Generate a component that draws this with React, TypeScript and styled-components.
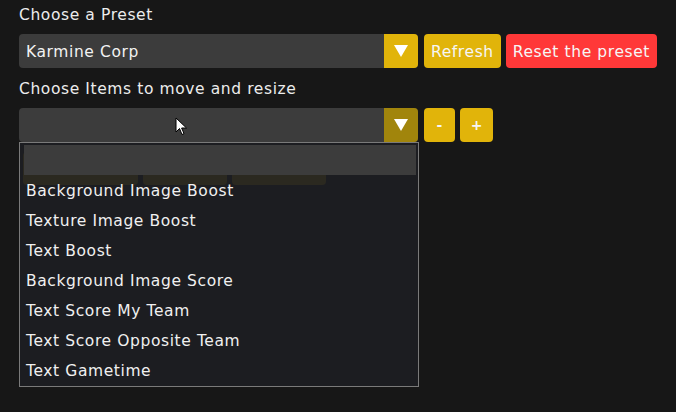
import React from 'react';
import styled, { createGlobalStyle } from 'styled-components';

const GlobalStyle = createGlobalStyle`
  html, body {
    margin: 0;
    padding: 0;
    min-height: 100%;
    background-color: #171717;
  }
  body {
    font-family: 'DejaVu Sans', 'Liberation Sans', sans-serif;
    color: #ececec;
  }
`;

const items = [
  'Background Image Boost',
  'Texture Image Boost',
  'Text Boost',
  'Background Image Score',
  'Text Score My Team',
  'Text Score Opposite Team',
  'Text Gametime',
];

function Arrow() {
  return (
    <svg width="14" height="12" viewBox="0 0 14 12">
      <polygon points="0,0 14,0 7,12" fill="#ffffff" />
    </svg>
  );
}

function Cursor() {
  return (
    <svg width="14" height="20" viewBox="0 0 14 20">
      <path
        d="M1 1 L1 15 L4.5 11.5 L7 17.5 L9 16.6 L6.6 11 L11.5 11 Z"
        fill="#ffffff"
        stroke="#000000"
        strokeWidth="1"
        strokeLinejoin="round"
      />
    </svg>
  );
}

export default function App() {
  return (
    <>
      <GlobalStyle />
      <Page>
        <Label>Choose a Preset</Label>
        <Row>
          <Select>
            <SelectValue>Karmine Corp</SelectValue>
            <ArrowBox>
              <Arrow />
            </ArrowBox>
          </Select>
          <Button>Refresh</Button>
          <Button $danger>Reset the preset</Button>
        </Row>

        <Label>Choose Items to move and resize</Label>
        <Field>
          <Row>
            <Select>
              <SelectValue />
              <ArrowBox $dim>
                <Arrow />
              </ArrowBox>
              <CursorSpot>
                <Cursor />
              </CursorSpot>
            </Select>
            <SmallButton $w={31}>-</SmallButton>
            <SmallButton $w={33}>+</SmallButton>
          </Row>
          <GhostRow>
            <GhostButton $w={115} />
            <GhostButton $w={84} />
            <GhostButton $w={94} />
          </GhostRow>
          <Menu>
            <Search />
            {items.map((item) => (
              <Option key={item}>{item}</Option>
            ))}
          </Menu>
        </Field>
      </Page>
    </>
  );
}

const Page = styled.div`
  box-sizing: border-box;
  min-height: 412px;
  padding: 4px 19px;
  display: flex;
  flex-direction: column;
`;

const Label = styled.div`
  font-size: 15.5px;
  line-height: 20px;
  padding-top: 1px;
  margin: 0 0 9px;
  letter-spacing: 0.6px;
  color: #ececec;
  & + div {
    margin-bottom: 10px;
  }
`;

const Row = styled.div`
  display: flex;
  align-items: center;
  gap: 5px;
`;

const Field = styled.div`
  position: relative;
`;

const Select = styled.div`
  position: relative;
  flex: none;
  width: 399px;
  height: 34px;
  display: flex;
  border-radius: 4px;
  background-color: #3c3c3c;
  margin-right: 1px;
`;

const SelectValue = styled.div`
  flex: 1;
  display: flex;
  align-items: center;
  padding: 1px 0 0 7px;
  font-size: 15.5px;
  letter-spacing: 0.6px;
  color: #f2f2f2;
`;

const ArrowBox = styled.div<{ $dim?: boolean }>`
  width: 34px;
  display: flex;
  align-items: center;
  justify-content: center;
  border-radius: 0 4px 4px 0;
  background-color: ${(p) => (p.$dim ? '#a1850c' : '#e1b40a')};
`;

const CursorSpot = styled.div`
  position: absolute;
  left: 156px;
  top: 9px;
  line-height: 0;
`;

const Button = styled.button<{ $danger?: boolean }>`
  flex: none;
  height: 34px;
  padding: 1px 7px 0;
  border: none;
  border-radius: 4px;
  white-space: nowrap;
  font-family: inherit;
  font-size: 15.5px;
  letter-spacing: 0.6px;
  color: #f6f6f6;
  background-color: ${(p) => (p.$danger ? '#ff3838' : '#e1b40a')};
`;

const SmallButton = styled.button<{ $w: number }>`
  flex: none;
  width: ${(p) => p.$w}px;
  height: 34px;
  padding: 0;
  border: none;
  border-radius: 4px;
  font-family: inherit;
  font-size: 14px;
  font-weight: bold;
  color: #f6f6f6;
  background-color: #e1b40a;
`;

const GhostRow = styled.div`
  display: flex;
  gap: 5px;
  margin: 10px 0 0 4px;
`;

const GhostButton = styled.div<{ $w: number }>`
  width: ${(p) => p.$w}px;
  height: 33px;
  border-radius: 4px;
  background-color: #e1b40a;
`;

const Menu = styled.div`
  position: absolute;
  left: 0;
  top: 34px;
  width: 398px;
  padding: 2px 0 1px;
  border: 1px solid #7a7a7a;
  background-color: rgba(29, 30, 34, 0.93);
`;

const Search = styled.div`
  height: 30px;
  margin: 0 2px 0 4px;
  background-color: #3c3c3c;
`;

const Option = styled.div`
  height: 30px;
  line-height: 32px;
  padding-left: 6px;
  font-size: 15.5px;
  letter-spacing: 0.6px;
  color: #f0f0f0;
`;
